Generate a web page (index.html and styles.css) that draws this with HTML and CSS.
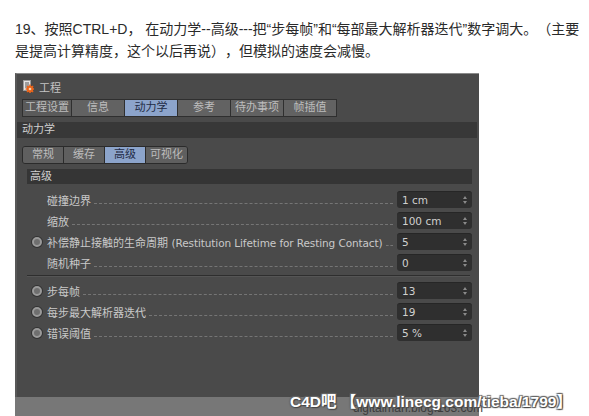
FILE: index.html
```html
<!DOCTYPE html>
<html lang="zh-CN">
<head>
    <meta charset="UTF-8">
    <title>动力学设置</title>
    <link rel="stylesheet" href="styles.css">
</head>
<body>
    <p class="intro">19、按照CTRL+D， 在动力学--高级---把“步每帧”和“每部最大解析器迭代”数字调大。（主要<br>是提高计算精度，这个以后再说），但模拟的速度会减慢。</p>

    <div class="shot">
        <div class="panel">
            <div class="title">
                <svg class="title-icon" width="11" height="13" viewBox="0 0 11 13">
                    <rect x="0.5" y="0.5" width="7" height="10" fill="#e4e4e4" stroke="#9a9a9a"/>
                    <path d="M2 3h4M2 5h4M2 7h3" stroke="#555" stroke-width="1"/>
                    <g transform="translate(7 9)">
                        <circle r="3.3" fill="#e8641c"/>
                        <path d="M-0.8 -4.4h1.6v8.8h-1.6zM-4.4 -0.8h8.8v1.6h-8.8z" fill="#e8641c"/>
                        <path d="M-3.6 -2.5l1.1 -1.1 6.1 6.1 -1.1 1.1zM2.5 -3.6l1.1 1.1 -6.1 6.1 -1.1 -1.1z" fill="#e8641c"/>
                        <circle r="1.3" fill="#f6d2a8"/>
                    </g>
                </svg>
                <span>工程</span>
            </div>

            <div class="tabs">
                <span class="tab first">工程设置</span>
                <span class="tab">信息</span>
                <span class="tab active">动力学</span>
                <span class="tab">参考</span>
                <span class="tab">待办事项</span>
                <span class="tab">帧插值</span>
            </div>

            <div class="section">动力学</div>

            <div class="subtabs">
                <span class="subtab">常规</span>
                <span class="subtab">缓存</span>
                <span class="subtab active">高级</span>
                <span class="subtab">可视化</span>
            </div>

            <div class="group-head">高级</div>

            <div class="rows">
                <div class="row">
                    <span class="radio-slot"></span>
                    <span class="label">碰撞边界</span>
                    <span class="leader"></span>
                    <span class="field">1 cm<span class="spin"></span></span>
                </div>
                <div class="row">
                    <span class="radio-slot"></span>
                    <span class="label">缩放</span>
                    <span class="leader"></span>
                    <span class="field">100 cm<span class="spin"></span></span>
                </div>
                <div class="row">
                    <span class="radio-slot"><span class="radio"></span></span>
                    <span class="label">补偿静止接触的生命周期 <span class="en">(Restitution Lifetime for Resting Contact)</span></span>
                    <span class="leader"></span>
                    <span class="field">5<span class="spin"></span></span>
                </div>
                <div class="row">
                    <span class="radio-slot"></span>
                    <span class="label">随机种子</span>
                    <span class="leader"></span>
                    <span class="field">0<span class="spin"></span></span>
                </div>
            </div>

            <div class="sep"></div>

            <div class="rows">
                <div class="row">
                    <span class="radio-slot"><span class="radio"></span></span>
                    <span class="label">步每帧</span>
                    <span class="leader"></span>
                    <span class="field">13<span class="spin"></span></span>
                </div>
                <div class="row">
                    <span class="radio-slot"><span class="radio"></span></span>
                    <span class="label">每步最大解析器迭代</span>
                    <span class="leader"></span>
                    <span class="field">19<span class="spin"></span></span>
                </div>
                <div class="row">
                    <span class="radio-slot"><span class="radio"></span></span>
                    <span class="label">错误阈值</span>
                    <span class="leader"></span>
                    <span class="field">5 %<span class="spin"></span></span>
                </div>
            </div>
        </div>
        <div class="strip"></div>
    </div>

    <div class="blog">digitalman.blog.163.com</div>
    <div class="watermark">C4D吧 【www.linecg.com/tieba/1799】</div>
</body>
</html>
```

FILE: styles.css
```css
html, body {
    margin: 0;
    background-color: #fff;
    overflow: hidden;
}

body {
    font-family: "Liberation Sans", "Noto Sans CJK SC", sans-serif;
    height: 416px;
    text-spacing-trim: space-all;
}

.intro {
    margin: 0;
    padding: 18px 0 0 15px;
    font-size: 14px;
    line-height: 22px;
    color: #2a2a2a;
    white-space: nowrap;
}

.shot {
    margin: 11px 0 0 15px;
    width: 464px;
}

/* dark C4D attribute panel */
.panel {
    height: 324px;
    background-color: #4a4a4a;
    border-top: 1px solid #8a8a8a;
    border-left: 2px solid #585858;
    box-sizing: border-box;
    font-family: "DejaVu Sans", "Noto Sans CJK SC", sans-serif;
    font-size: 11px;
    color: #c9c9c9;
}

.title {
    height: 25px;
    display: flex;
    align-items: center;
    padding-left: 6px;
    gap: 5px;
    color: #c4c4c4;
    font-size: 11px;
}

.title-icon {
    display: block;
}

.tabs {
    display: flex;
    height: 18px;
    margin-left: 5px;
}

.tab {
    min-width: 53px;
    padding: 0 2px;
    box-sizing: border-box;
    border: 1px solid #2f2f2f;
    border-left: none;
    background-color: #626262;
    color: #bdbdbd;
    font-size: 11px;
    line-height: 16px;
    text-align: center;
}

.tab.first {
    min-width: 48px;
    border-left: 1px solid #2f2f2f;
    background-color: #5a5a5a;
}

.tab.active,
.subtab.active {
    background-color: #8ca4cb;
    color: #1f2b45;
}

.section {
    height: 16px;
    margin-top: 5px;
    margin-right: 2px;
    padding-left: 5px;
    background-color: #383838;
    font-size: 11px;
    line-height: 16px;
    color: #cfcfcf;
}

.subtabs {
    display: flex;
    width: max-content;
    height: 18px;
    margin: 8px 0 0 5px;
    border: 1px solid #2b2b2b;
    border-radius: 3px;
    box-sizing: border-box;
    overflow: hidden;
}

.subtab {
    min-width: 41px;
    padding: 0 2px;
    box-sizing: border-box;
    border-right: 1px solid #2b2b2b;
    background-color: #5f5f5f;
    color: #bdbdbd;
    font-size: 11px;
    line-height: 16px;
    text-align: center;
}

.subtab:last-child {
    border-right: none;
}

.group-head {
    height: 15px;
    margin: 5px 7px 0 10px;
    padding-left: 3px;
    background-color: #353535;
    font-size: 11px;
    line-height: 15px;
    color: #cfcfcf;
}

.rows {
    margin-top: 5px;
}

.row {
    display: flex;
    align-items: center;
    height: 21px;
    padding-right: 7px;
}

.radio-slot {
    width: 10px;
    height: 10px;
    margin: 0 5px 0 15px;
    flex: none;
}

.radio {
    display: block;
    width: 10px;
    height: 10px;
    border-radius: 50%;
    box-sizing: border-box;
    border: 2px solid #9a9a9a;
    background-color: #6f6f6f;
    box-shadow: 0 0 0 1px #333;
}

.label {
    white-space: nowrap;
}

.label .en {
    font-size: 10.5px;
    letter-spacing: -0.1px;
}

.leader {
    flex: 1;
    min-width: 2px;
    height: 0;
    margin: 7px 4px 0 3px;
    border-bottom: 1px dashed #757575;
}

.field {
    position: relative;
    width: 75px;
    height: 17px;
    flex: none;
    box-sizing: border-box;
    padding-left: 5px;
    border-radius: 3px;
    border-top: 1px solid #262626;
    background-color: #2f2f2f;
    color: #d0d0d0;
    font-size: 10.5px;
    line-height: 16px;
}

/* up/down spinner arrows */
.spin {
    position: absolute;
    right: 5px;
    top: 4px;
    width: 0;
    height: 0;
    border-left: 2px solid transparent;
    border-right: 2px solid transparent;
    border-bottom: 3px solid #8a8a8a;
}

.spin::after {
    content: "";
    position: absolute;
    left: -2px;
    top: 5px;
    border-left: 2px solid transparent;
    border-right: 2px solid transparent;
    border-top: 3px solid #8a8a8a;
}

.sep {
    height: 1px;
    margin: 2px 9px 0 10px;
    background-color: #2e2e2e;
    border-bottom: 1px solid #555;
}

.sep + .rows {
    margin-top: 3px;
}

.strip {
    height: 19px;
    background-color: #777;
}

.blog {
    position: absolute;
    left: 353px;
    top: 401px;
    font-size: 12px;
    color: #3c3c3c;
}

.watermark {
    position: absolute;
    left: 290px;
    top: 389px;
    font-size: 15.5px;
    font-weight: bold;
    color: #fff;
    white-space: nowrap;
    text-shadow: 1px 1px 1px #444, -1px -1px 1px #666, 1px -1px 1px #666, -1px 1px 1px #666;
}
```
